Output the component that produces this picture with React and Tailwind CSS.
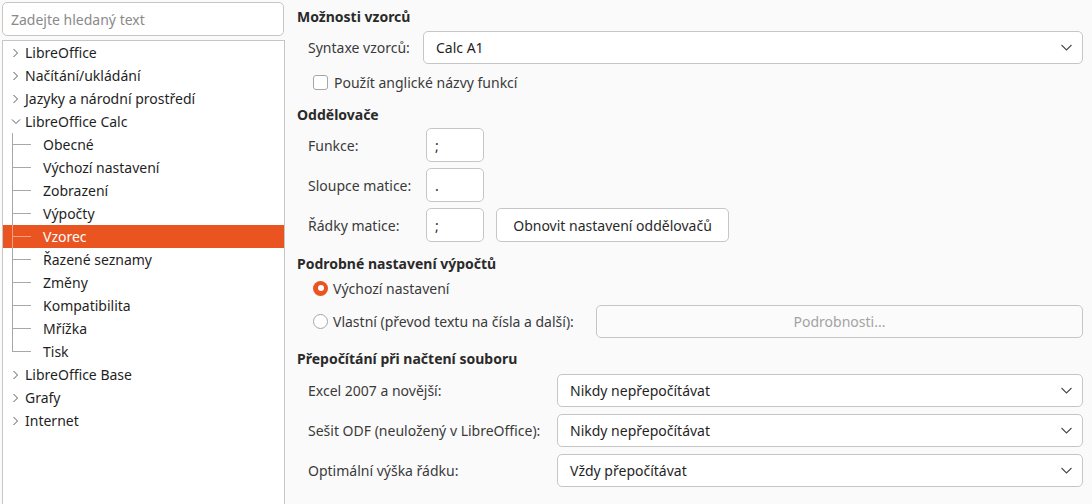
import React from "react";

const font = { fontFamily: '"Noto Sans", "Open Sans", sans-serif' };

function ChevRight() {
  return (
    <svg width="7" height="10" viewBox="0 0 7 10" className="shrink-0">
      <path d="M1.5 1 L5.5 5 L1.5 9" fill="none" stroke="#5a5a5a" strokeWidth="1" />
    </svg>
  );
}

function ChevDown() {
  return (
    <svg width="10" height="7" viewBox="0 0 10 7" className="shrink-0">
      <path d="M1 1.5 L5 5.5 L9 1.5" fill="none" stroke="#5a5a5a" strokeWidth="1" />
    </svg>
  );
}

function SelectChev() {
  return (
    <svg width="11" height="7" viewBox="0 0 11 7" className="shrink-0">
      <path d="M0.5 1 L5.5 6 L10.5 1" fill="none" stroke="#4a4a4a" strokeWidth="1.1" />
    </svg>
  );
}

function TopItem({ label, open }) {
  return (
    <div className="flex h-[23px] items-center">
      <div className="flex w-[22px] items-center justify-center pl-[3px]">
        {open ? <ChevDown /> : <ChevRight />}
      </div>
      <span className="text-[14px] text-[#1f1f1f]">{label}</span>
    </div>
  );
}

function Child({ label, last, selected }) {
  return (
    <div
      className={
        "flex h-[23px] items-stretch " +
        (selected ? "bg-[#e95420] text-white" : "text-[#1f1f1f]")
      }
    >
      <div className="ml-[9px] flex w-[19px] flex-col">
        <div
          className={
            "h-[12px] border-b border-l " +
            (selected ? "border-[#f0a383]" : "border-[#a8a8a8]")
          }
        />
        <div
          className={
            "flex-1 " +
            (last ? "" : selected ? "border-l border-[#f0a383]" : "border-l border-[#a8a8a8]")
          }
        />
      </div>
      <span className="ml-[12px] flex items-center text-[14px]">{label}</span>
    </div>
  );
}

function Select({ value, className }) {
  return (
    <div
      className={
        "flex h-[33px] items-center justify-between rounded-[5px] border border-[#c6c6c6] bg-white pl-[12px] pr-[10px] " +
        className
      }
    >
      <span className="text-[14px] text-[#1f1f1f]">{value}</span>
      <SelectChev />
    </div>
  );
}

function SepInput({ value }) {
  return (
    <div className="flex h-[34px] w-[58px] items-center rounded-[5px] border border-[#c6c6c6] bg-white pl-[8px] text-[14px] text-[#1f1f1f]">
      {value}
    </div>
  );
}

function Heading({ children, className }) {
  return (
    <div className={"flex h-[20px] items-center pl-[12px] text-[14px] font-bold text-[#2a2a2a] " + (className || "")}>
      {children}
    </div>
  );
}

export default function App() {
  const children = [
    "Obecné",
    "Výchozí nastavení",
    "Zobrazení",
    "Výpočty",
    "Vzorec",
    "Řazené seznamy",
    "Změny",
    "Kompatibilita",
    "Mřížka",
    "Tisk",
  ];
  return (
    <div className="flex h-[504px] w-[1092px] overflow-hidden bg-[#fafafa]" style={font}>
      {/* left column */}
      <div className="flex w-[285px] shrink-0 flex-col pl-[2px] pt-[2px]">
        <div className="mr-[1px] flex h-[34px] items-center rounded-[5px] border border-[#c6c6c6] bg-white pl-[8px] text-[14px] text-[#8a8a8a]">
          Zadejte hledaný text
        </div>
        <div className="mt-[4px] flex-1 border border-b-0 border-[#c6c6c6] bg-white">
          <TopItem label="LibreOffice" />
          <TopItem label="Načítání/ukládání" />
          <TopItem label="Jazyky a národní prostředí" />
          <TopItem label="LibreOffice Calc" open />
          {children.map((c, i) => (
            <Child key={c} label={c} last={i === children.length - 1} selected={c === "Vzorec"} />
          ))}
          <TopItem label="LibreOffice Base" />
          <TopItem label="Grafy" />
          <TopItem label="Internet" />
        </div>
      </div>

      {/* right panel */}
      <div className="flex flex-1 flex-col pr-[9px] pt-[6px] text-[14px] text-[#3a3a3a]">
        <Heading>Možnosti vzorců</Heading>
        <div className="mt-[5px] flex items-center">
          <span className="w-[138px] shrink-0 pl-[23px]">Syntaxe vzorců:</span>
          <Select value="Calc A1" className="flex-1" />
        </div>
        <div className="mt-[9px] flex h-[18px] items-center pl-[28px]">
          <div className="h-[15px] w-[15px] rounded-[3px] border border-[#a6a6a6] bg-white" />
          <span className="ml-[6px]">Použít anglické názvy funkcí</span>
        </div>

        <Heading className="mt-[13px]">Oddělovače</Heading>
        <div className="mt-[4px] flex items-center">
          <span className="w-[141px] shrink-0 pl-[23px]">Funkce:</span>
          <SepInput value=";" />
        </div>
        <div className="mt-[6px] flex items-center">
          <span className="w-[141px] shrink-0 pl-[23px]">Sloupce matice:</span>
          <SepInput value="." />
        </div>
        <div className="mt-[6px] flex items-center">
          <span className="w-[141px] shrink-0 pl-[23px]">Řádky matice:</span>
          <SepInput value=";" />
          <div className="ml-[12px] flex h-[34px] w-[233px] items-center justify-center rounded-[5px] border border-[#c6c6c6] bg-white text-[#2a2a2a]">
            Obnovit nastavení oddělovačů
          </div>
        </div>

        <Heading className="mt-[11px]">Podrobné nastavení výpočtů</Heading>
        <div className="mt-[5px] flex h-[20px] items-center pl-[28px]">
          <div className="flex h-[15px] w-[15px] items-center justify-center rounded-full bg-[#e95420]">
            <div className="h-[6px] w-[6px] rounded-full bg-white" />
          </div>
          <span className="ml-[5px]">Výchozí nastavení</span>
        </div>
        <div className="mt-[7px] flex items-center">
          <div className="flex w-[311px] shrink-0 items-center pl-[28px]">
            <div className="h-[15px] w-[15px] rounded-full border border-[#a6a6a6] bg-white" />
            <span className="ml-[5px]">Vlastní (převod textu na čísla a další):</span>
          </div>
          <div className="flex h-[33px] flex-1 items-center justify-center rounded-[5px] border border-[#c6c6c6] bg-[#fbfbfb] text-[#a3a3a3]">
            Podrobnosti...
          </div>
        </div>

        <Heading className="mt-[10px]">Přepočítání při načtení souboru</Heading>
        <div className="mt-[6px] flex items-center">
          <span className="w-[272px] shrink-0 pl-[23px]">Excel 2007 a novější:</span>
          <Select value="Nikdy nepřepočítávat" className="flex-1" />
        </div>
        <div className="mt-[7px] flex items-center">
          <span className="w-[272px] shrink-0 pl-[23px]">Sešit ODF (neuložený v LibreOffice):</span>
          <Select value="Nikdy nepřepočítávat" className="flex-1" />
        </div>
        <div className="mt-[7px] flex items-center">
          <span className="w-[272px] shrink-0 pl-[23px]">Optimální výška řádku:</span>
          <Select value="Vždy přepočítávat" className="flex-1" />
        </div>
      </div>
    </div>
  );
}
